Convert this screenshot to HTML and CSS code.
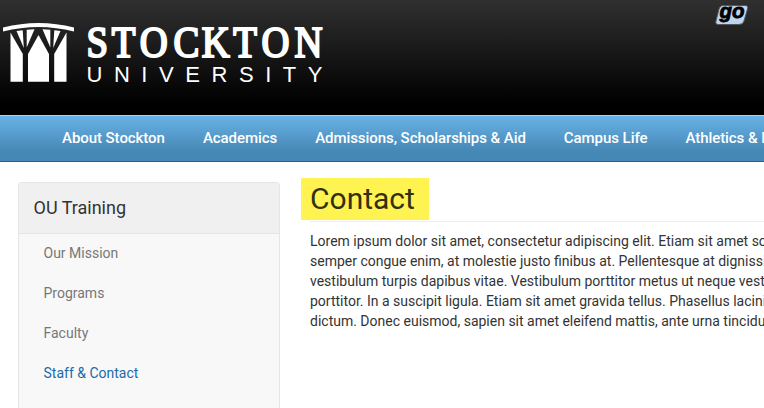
FILE: index.html
```html
<!DOCTYPE html>
<html lang="en">
  <head>
    <meta charset="UTF-8" />
    <meta name="viewport" content="width=device-width, initial-scale=1.0" />
    <title>Contact - Stockton University</title>
    <link rel="stylesheet" href="styles.css">
  </head>
  <body>
    <header>
      <svg class="logo" width="330" height="92" viewBox="0 0 330 92">
        <g fill="#fff">
          <path d="M3 27.500Q38.500 18.500 74 27.500V31.500Q38.500 22.500 3 31.500Z" />
          <path d="M10.500 32.500L22.800 54V81.700H10.500Z" />
          <path d="M16.500 31L22.700 30.200L23.800 48Z" />
          <path d="M26.700 29.700L34.500 29.200L26.700 47.500Z" />
          <path d="M38.500 35L28 54V81.700H49V54Z" />
          <path d="M66.500 32.500L54.200 54V81.700H66.500Z" />
          <path d="M60.500 31L54.300 30.200L53.200 48Z" />
          <path d="M50.300 29.700L42.500 29.200L50.300 47.500Z" />
        </g>
        <text class="logo-name" x="99.5 128.5 160.5 199.5 232 268 300.5 338.5" y="57" transform="scale(.87 1)">STOCKTON</text>
        <text class="logo-type" x="86.500" y="81.700" textLength="236">UNIVERSITY</text>
      </svg>

      <svg class="go" width="36" height="24" viewBox="0 0 36 24">
        <path d="M9 1.500H31Q34.500 1.500 33.500 5L30 17Q29 20.500 25 20.500H4.500Q1 20.500 2 17L5 5Q6 1.500 9 1.500Z" />
        <text x="5.500" y="14.200" textLength="25" lengthAdjust="spacingAndGlyphs">go</text>
      </svg>
    </header>

    <nav>
      <a href="#">About Stockton</a>
      <a href="#">Academics</a>
      <a href="#">Admissions, Scholarships &amp; Aid</a>
      <a href="#">Campus Life</a>
      <a href="#">Athletics &amp; Recreation</a>
    </nav>

    <div class="container">
      <aside>
        <h4>OU Training</h4>
        <ul>
          <li><a href="#">Our Mission</a></li>
          <li><a href="#">Programs</a></li>
          <li><a href="#">Faculty</a></li>
          <li class="active"><a href="#">Staff &amp; Contact</a></li>
        </ul>
      </aside>

      <main>
        <h1><span>Contact</span></h1>
        <p>
          Lorem ipsum dolor sit amet, consectetur adipiscing elit. Etiam sit amet sodales<br>
          semper congue enim, at molestie justo finibus at. Pellentesque at dignissim<br>
          vestibulum turpis dapibus vitae. Vestibulum porttitor metus ut neque vestibulum<br>
          porttitor. In a suscipit ligula. Etiam sit amet gravida tellus. Phasellus lacinia<br>
          dictum. Donec euismod, sapien sit amet eleifend mattis, ante urna tincidunt
        </p>
      </main>
    </div>
  </body>
</html>
```

FILE: styles.css
```css
* {
  box-sizing: border-box;
}

body {
  margin: 0;
  height: 408px;
  overflow: hidden;
  display: flex;
  flex-direction: column;
  background: #fff;
  color: #333;
  font: 14px/20px Roboto, sans-serif;
}

a {
  color: inherit;
  text-decoration: none;
}

header {
  flex: none;
  display: flex;
  justify-content: space-between;
  align-items: flex-start;
  height: 115px;
  padding-right: 14px;
  background: linear-gradient(#303030, #000 90%);
}

.logo {
  fill: #fff;
}

.logo-name {
  font: 44.5px "Liberation Serif", serif;
  stroke: #fff;
  stroke-width: 2.2px;
}

.logo-type {
  font: 22px "Liberation Sans", sans-serif;
}

.go {
  margin-top: 4px;

  path {
    fill: #bdd5ed;
    stroke: #555;
  }

  text {
    font: italic bold 20px "Liberation Sans", sans-serif;
    stroke: #000;
    stroke-width: 0.8px;
  }
}

nav {
  flex: none;
  display: flex;
  gap: 38px;
  height: 47px;
  padding-left: 62px;
  overflow: hidden;
  background: linear-gradient(#69b2e6, #4587b5 80%);
  border-top: 1px solid #a9d3f0;
  border-bottom: 1px solid #2b5f87;
  color: #fff;
  font-size: 15px;
  font-weight: 500;
  letter-spacing: -0.06px;
  line-height: 44px;
  white-space: nowrap;
}

.container {
  flex: 1;
  display: flex;
  gap: 30px;
  padding-left: 18px;
  overflow: hidden;
}

aside {
  flex: none;
  width: 262px;
  margin-top: 20px;
  background: #f8f8f8;
  border: 1px solid #e5e5e5;
  border-bottom: 0;
  border-radius: 4px 4px 0 0;

  h4 {
    margin: 0;
    padding: 0 14.5px;
    background: #f0f0f0;
    border-bottom: 1px solid #e5e5e5;
    border-radius: 3px 3px 0 0;
    font-size: 18px;
    font-weight: 400;
    line-height: 50px;
  }

  ul {
    margin: 0;
    padding: 0 24.5px;
    list-style: none;
  }

  li {
    padding: 9px 0 11px;
    color: #777;
  }

  .active {
    color: #1a6ba8;
  }
}

main {
  flex: none;
  width: 520px;
  padding-top: 16px;

  h1 {
    display: flex;
    height: 44px;
    margin: 0 0 9px;
    border-bottom: 1px solid #eee;
    font-size: 30px;
    font-weight: 400;
    line-height: 42px;
  }

  h1 span {
    height: 42px;
    margin-left: -9px;
    padding: 0 14px 0 9px;
    background: #fff352;
    color: #333011;
  }

  p {
    margin: 0;
    white-space: nowrap;
  }
}
```
